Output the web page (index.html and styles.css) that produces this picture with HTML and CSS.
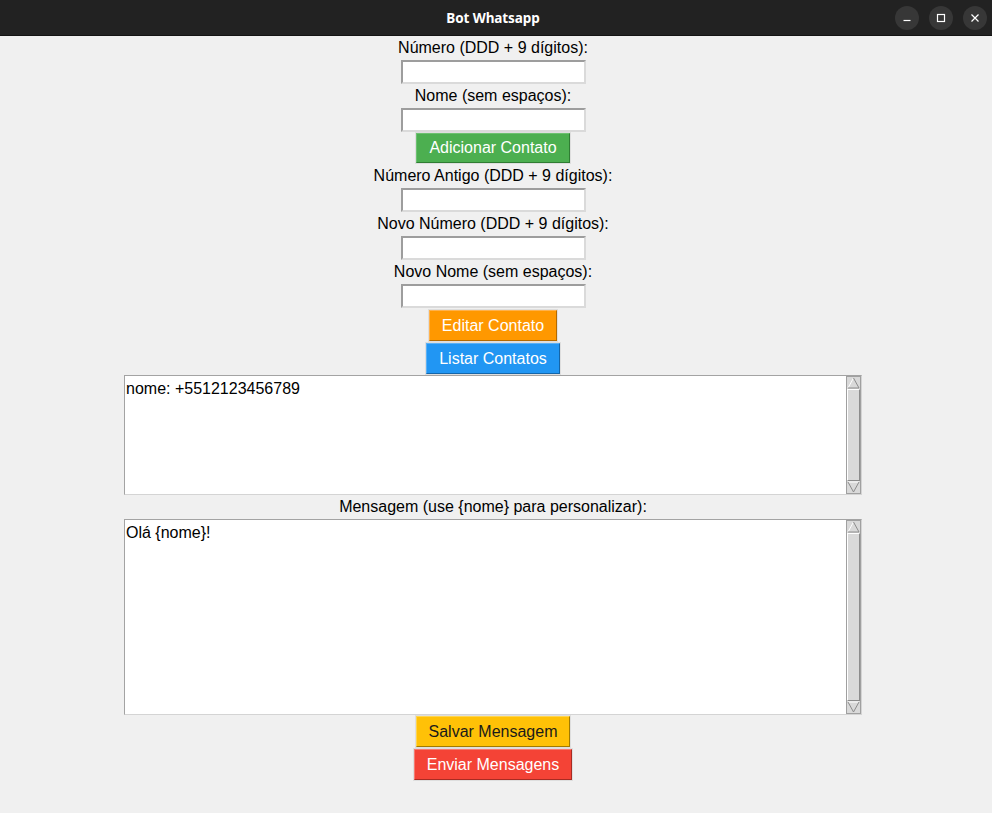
FILE: index.html
```html
<!DOCTYPE html>
<html lang="pt-BR">
<head>
<meta charset="utf-8">
<title>Bot Whatsapp</title>
<link rel="stylesheet" href="styles.css">
</head>
<body>
<div class="window">
  <header class="titlebar">
    <div class="title">Bot Whatsapp</div>
    <div class="controls">
      <span class="ctl"><svg width="10" height="10" viewBox="0 0 10 10"><path d="M1.5 7.5h7" stroke="#fff" stroke-width="1.2"/></svg></span>
      <span class="ctl"><svg width="10" height="10" viewBox="0 0 10 10"><rect x="1.5" y="1.5" width="7" height="7" fill="none" stroke="#fff" stroke-width="1.2"/></svg></span>
      <span class="ctl"><svg width="10" height="10" viewBox="0 0 10 10"><path d="M1.5 1.5l7 7M8.5 1.5l-7 7" stroke="#fff" stroke-width="1.2"/></svg></span>
    </div>
  </header>
  <main class="content">
    <div class="label">Número (DDD + 9 dígitos):</div>
    <div class="entry"></div>
    <div class="label">Nome (sem espaços):</div>
    <div class="entry"></div>
    <div class="btn-ring"><div class="btn green">Adicionar Contato</div></div>
    <div class="label">Número Antigo (DDD + 9 dígitos):</div>
    <div class="entry"></div>
    <div class="label">Novo Número (DDD + 9 dígitos):</div>
    <div class="entry"></div>
    <div class="label">Novo Nome (sem espaços):</div>
    <div class="entry"></div>
    <div class="btn-ring tall gap1"><div class="btn orange">Editar Contato</div></div>
    <div class="btn-ring tall"><div class="btn blue">Listar Contatos</div></div>
    <div class="textbox tb1">
      <div class="text">nome: +5512123456789</div>
      <div class="scrollbar">
        <div class="arrow"><svg width="13" height="12" viewBox="0 0 13 12"><polygon points="6.5,1 12,11 1,11" fill="#d9d9d9"/><path d="M1 11L6.5 1" stroke="#ffffff" stroke-width="1"/><path d="M6.5 1L12 11H1" fill="none" stroke="#8c8c8c" stroke-width="1"/></svg></div>
        <div class="thumb"></div>
        <div class="arrow"><svg width="13" height="12" viewBox="0 0 13 12"><polygon points="1,1 12,1 6.5,11" fill="#d9d9d9"/><path d="M1 1H12" stroke="#ffffff" stroke-width="1"/><path d="M1 1L6.5 11L12 1" fill="none" stroke="#8c8c8c" stroke-width="1"/></svg></div>
      </div>
    </div>
    <div class="label">Mensagem (use {nome} para personalizar):</div>
    <div class="textbox tb2">
      <div class="text">Olá {nome}!</div>
      <div class="scrollbar">
        <div class="arrow"><svg width="13" height="12" viewBox="0 0 13 12"><polygon points="6.5,1 12,11 1,11" fill="#d9d9d9"/><path d="M1 11L6.5 1" stroke="#ffffff" stroke-width="1"/><path d="M6.5 1L12 11H1" fill="none" stroke="#8c8c8c" stroke-width="1"/></svg></div>
        <div class="thumb"></div>
        <div class="arrow"><svg width="13" height="12" viewBox="0 0 13 12"><polygon points="1,1 12,1 6.5,11" fill="#d9d9d9"/><path d="M1 1H12" stroke="#ffffff" stroke-width="1"/><path d="M1 1L6.5 11L12 1" fill="none" stroke="#8c8c8c" stroke-width="1"/></svg></div>
      </div>
    </div>
    <div class="btn-ring tall"><div class="btn yellow">Salvar Mensagem</div></div>
    <div class="btn-ring tall"><div class="btn red">Enviar Mensagens</div></div>
  </main>
</div>
</body>
</html>
```
FILE: styles.css
```css
html, body {
  margin: 0;
  padding: 0;
  background: #f0f0f0;
}
body {
  width: 992px;
  height: 813px;
  overflow: hidden;
  font-family: "Liberation Sans", Arial, sans-serif;
}
.window {
  display: flex;
  flex-direction: column;
  height: 813px;
}
.titlebar {
  height: 36px;
  background: #222222;
  border-bottom: 1px solid #141414;
  box-sizing: border-box;
  display: flex;
  align-items: center;
  justify-content: center;
  position: relative;
  padding-right: 6px;
}
.title {
  color: #ffffff;
  font-family: "Noto Sans", "DejaVu Sans", sans-serif;
  font-weight: 700;
  font-size: 13.5px;
  letter-spacing: -0.1px;
}
.controls {
  position: absolute;
  right: 5px;
  top: 6px;
  display: flex;
  gap: 10px;
}
.ctl {
  width: 24px;
  height: 24px;
  border-radius: 50%;
  background: #373737;
  display: flex;
  align-items: center;
  justify-content: center;
}
.content {
  display: flex;
  flex-direction: column;
  align-items: center;
  padding-right: 6px;
  color: #000000;
  font-size: 16px;
}
.label {
  height: 24px;
  line-height: 24px;
  white-space: nowrap;
}
.entry {
  width: 185px;
  height: 24px;
  box-sizing: border-box;
  background: #ffffff;
  border: 2px solid;
  border-color: #9d9d9d #dadada #dadada #9d9d9d;
}
.btn-ring {
  border: 1px solid #dedede;
  height: 32px;
  box-sizing: border-box;
  display: flex;
}
.btn-ring.tall {
  height: 33px;
}
.gap1 {
  margin-top: 1px;
}
.btn {
  flex: 1;
  box-sizing: border-box;
  padding: 0 12px;
  display: flex;
  align-items: center;
  justify-content: center;
  color: #ffffff;
  border: 1px solid;
  white-space: nowrap;
}
.green {
  background: #4caf50;
  border-color: #6cc170 #2f7d33 #2f7d33 #6cc170;
}
.orange {
  background: #ff9800;
  border-color: #ffb24d #b36a00 #b36a00 #ffb24d;
}
.blue {
  background: #2196f3;
  border-color: #5ab1f6 #1465a8 #1465a8 #5ab1f6;
}
.yellow {
  background: #ffc107;
  color: #1a1a1a;
  border-color: #ffd54f #a07a00 #a07a00 #ffd54f;
}
.red {
  background: #f44336;
  border-color: #f77a70 #a82b22 #a82b22 #f77a70;
}
.textbox {
  width: 738px;
  box-sizing: border-box;
  display: flex;
  background: #ffffff;
  border: 1px solid;
  border-color: #a3a3a3 #d4d4d4 #d4d4d4 #a3a3a3;
}
.tb1 {
  height: 120px;
}
.tb2 {
  height: 196px;
}
.text {
  flex: 1;
  padding: 1px 1px;
  line-height: 24px;
  height: 24px;
  white-space: nowrap;
}
.scrollbar {
  width: 15px;
  box-sizing: border-box;
  background: #d9d9d9;
  border: 1px solid #a0a0a0;
  display: flex;
  flex-direction: column;
}
.arrow {
  height: 12px;
  display: flex;
  justify-content: center;
  align-items: center;
  flex: none;
}
.thumb {
  flex: 1;
  box-sizing: border-box;
  border: 1px solid;
  border-color: #ffffff #8c8c8c #8c8c8c #ffffff;
  background: #d9d9d9;
}
```
